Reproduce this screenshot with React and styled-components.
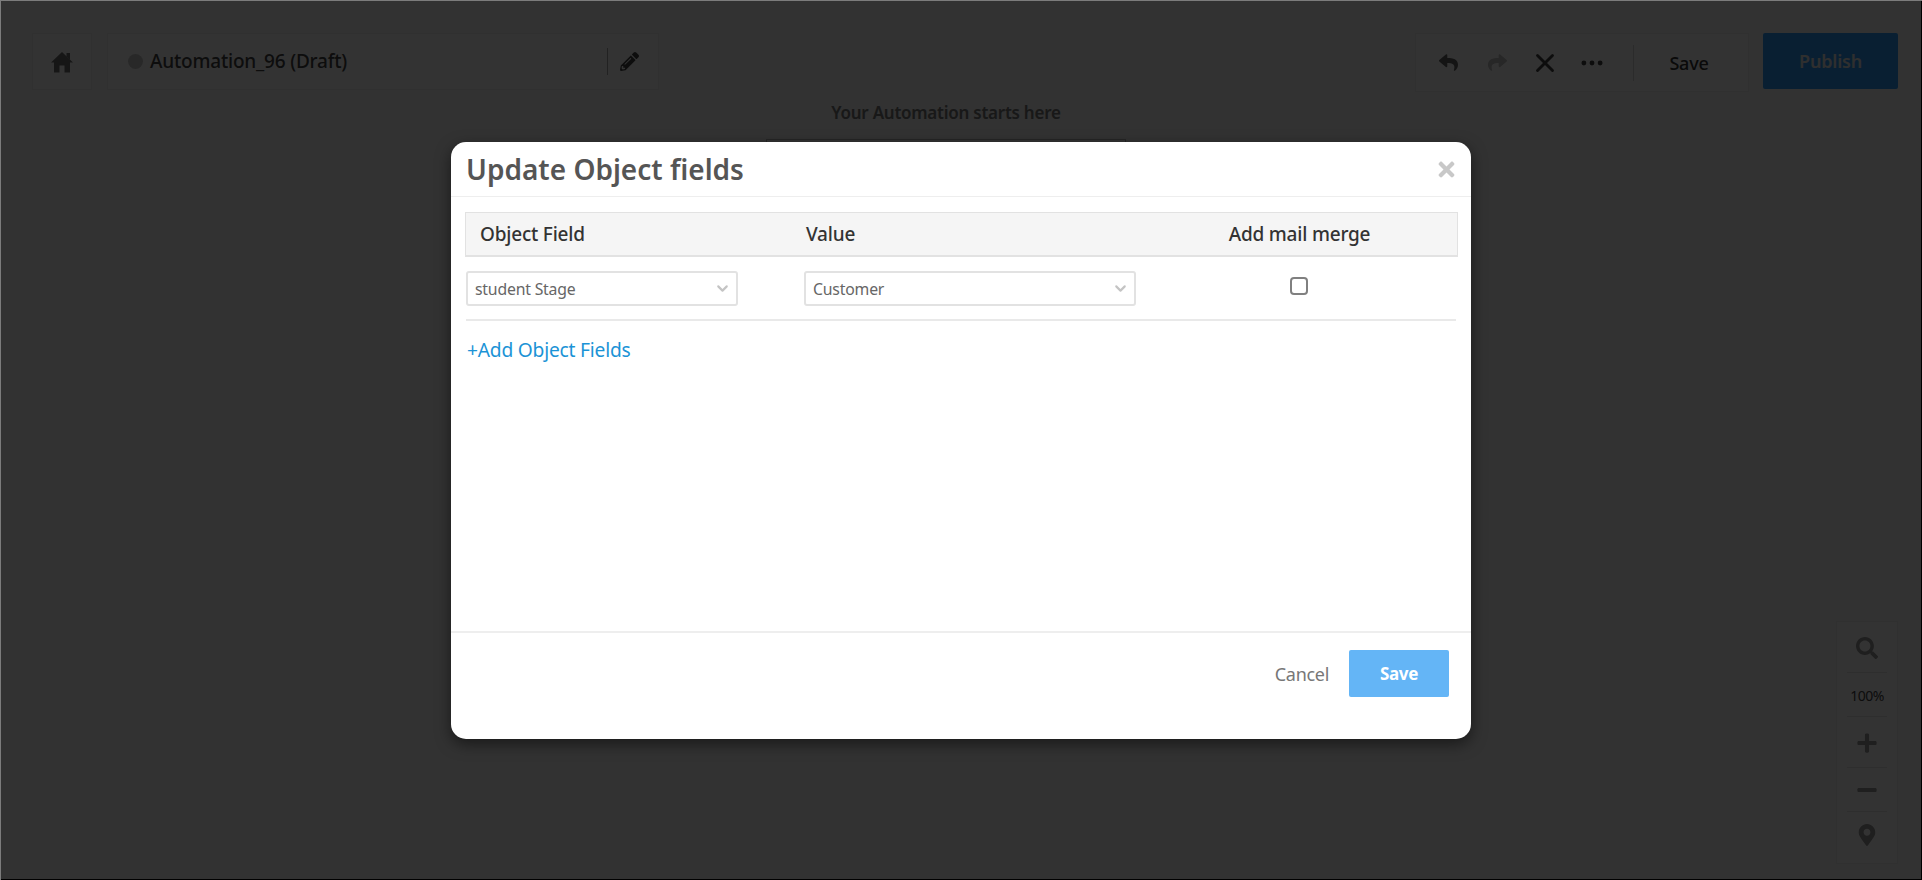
import React from 'react';
import styled, { createGlobalStyle } from 'styled-components';
import { FaPencilAlt, FaReply, FaShare, FaTimes, FaSearch, FaPlus, FaMinus, FaMapMarkerAlt } from 'react-icons/fa';
import { BsThreeDots } from 'react-icons/bs';
import { X, ChevronDown } from 'lucide-react';

const Global = createGlobalStyle`
  html, body { margin: 0; padding: 0; height: 880px; overflow: hidden; background: #f8f8f8; }
  * { box-sizing: border-box; }
  body { font-family: "Noto Sans", "Open Sans", Arial, sans-serif; }
`;

const Stage = styled.div`
  position: relative;
  width: 1922px;
  height: 880px;
  overflow: hidden;
  background: #f8f8f8;
  color: #555;
`;
const TopBar = styled.header`
  display: flex;
  align-items: flex-start;
  padding: 33px 24px 0 32px;
  gap: 15px;
`;
const Panel = styled.div`
  display: flex;
  align-items: center;
  background: #fff;
  border: 1px solid #f0f0f0;
`;
const HomeBox = styled(Panel)`
  width: 60px;
  height: 57px;
  justify-content: center;
  color: #707070;
`;
const NameBox = styled(Panel)`
  width: 552px;
  height: 57px;
  padding: 0 19px 0 20px;
`;
const Dot = styled.span`
  width: 15px;
  height: 15px;
  border-radius: 50%;
  background: #c8c8c8;
  flex: none;
  margin-right: 7px;
`;
const Name = styled.span`
  font-size: 19px;
  font-weight: 500;
  letter-spacing: -0.2px;
  flex: 1;
  color: #444;
  padding-bottom: 1px;
`;
const EditCell = styled.span`
  display: flex;
  align-items: center;
  height: 27px;
  padding-left: 12px;
  border-left: 1px solid #aaa;
  font-size: 19px;
  color: #444;
`;
const RightGroup = styled.div`
  margin-left: auto;
  display: flex;
  align-items: flex-start;
  gap: 14px;
`;
const Actions = styled(Panel)`
  width: 334px;
  height: 59px;
  padding-left: 22px;
`;
const ActionIcon = styled.span`
  display: flex;
  align-items: center;
  justify-content: center;
  width: ${p => p.$w}px;
  margin-right: ${p => p.$gap}px;
  color: ${p => p.$tone};
  font-size: ${p => p.$size}px;
`;
const ActionDivider = styled.span`
  width: 1px;
  height: 36px;
  background: #d4d4d4;
`;
const ActionSave = styled.span`
  flex: 1;
  text-align: center;
  font-size: 18px;
  font-weight: 500;
  color: #333;
  letter-spacing: -0.2px;
  padding-right: 4px;
`;
const Publish = styled.button`
  width: 135px;
  height: 56px;
  border: 0;
  border-radius: 2px;
  background: #2f9dfb;
  color: #e8e8e8;
  font: 600 18px "Noto Sans", sans-serif;
  letter-spacing: -0.2px;
`;
const Canvas = styled.main`
  display: flex;
  flex-direction: column;
  align-items: center;
  padding: 9px 30px 0 0;
`;
const StartLabel = styled.div`
  font-size: 17px;
  font-weight: 600;
  letter-spacing: -0.25px;
  line-height: 24px;
  color: #777;
`;
const TriggerCard = styled.div`
  width: 360px;
  height: 120px;
  margin-top: 14px;
  background: #fff;
  border: 1px solid #bbb;
`;
const ZoomPanel = styled.aside`
  position: absolute;
  left: 1836px;
  top: 621px;
  width: 62px;
  height: 243px;
  display: flex;
  flex-direction: column;
  align-items: center;
  background: #fff;
  border: 1px solid #eee;
`;
const ZoomCell = styled.div`
  width: 100%;
  height: ${p => p.$h}px;
  padding-bottom: ${p => p.$lift || 0}px;
  display: flex;
  align-items: center;
  justify-content: center;
  font-size: 22px;
  color: #999;
  position: relative;
  &:not(:last-child)::after {
    content: '';
    position: absolute;
    left: 10px;
    right: 10px;
    bottom: 0;
    height: 1px;
    background: #e4e4e4;
  }
`;
const ZoomText = styled.span`
  font-size: 14px;
  color: #444;
  letter-spacing: -0.5px;
`;
const Overlay = styled.div`
  position: absolute;
  inset: 0;
  display: flex;
  justify-content: center;
  align-items: flex-start;
  padding-top: 142px;
  background: rgba(0, 0, 0, 0.8);
  box-shadow: inset 1px 1px 0 #7c7c7c, inset -1px -1px 0 #000;
`;
const Modal = styled.section`
  width: 1020px;
  height: 597px;
  display: flex;
  flex-direction: column;
  background: #fff;
  border-radius: 15px;
  box-shadow: 0 5px 15px rgba(0, 0, 0, 0.5);
`;
const ModalHeader = styled.div`
  height: 55px;
  flex: none;
  display: flex;
  align-items: center;
  justify-content: space-between;
  padding: 0 13px 0 15px;
  border-bottom: 1px solid #eee;
`;
const Title = styled.h2`
  margin: 0;
  font-size: 28px;
  font-weight: 600;
  color: #555;
`;
const Close = styled.span`
  display: flex;
  font-size: 23px;
  color: #c8c8c8;
  margin-top: 1px;
`;
const ModalBody = styled.div`
  flex: 1;
  padding: 15px 14px 0 15px;
`;
const Columns = styled.div`
  display: grid;
  grid-template-columns: 338px 337px 1fr;
  align-items: center;
`;
const TableHead = styled(Columns)`
  height: 45px;
  background: #f5f5f5;
  border: 1px solid #e2e2e2;
  border-bottom-width: 2px;
  margin: 0 -1px;
  padding-left: 1px;
`;
const HeadCell = styled.div`
  font-size: 19px;
  font-weight: 500;
  letter-spacing: -0.2px;
  color: #333;
  padding-left: ${p => p.$pad || 0}px;
  text-align: ${p => (p.$center ? 'center' : 'left')};
`;
const FieldRow = styled(Columns)`
  height: 64px;
  padding-top: 14px;
  align-items: flex-start;
  border-bottom: 2px solid #e9e9e9;
  margin-right: 1px;
`;
const SelectBox = styled.div`
  width: ${p => p.$w}px;
  height: 35px;
  display: flex;
  align-items: center;
  justify-content: space-between;
  padding: 0 5px 0 7px;
  border: 2px solid #e2e2e2;
  border-radius: 3px;
  font-size: 15.8px;
  letter-spacing: -0.2px;
  color: #666;
  svg { color: #c4c4c4; }
`;
const CheckCell = styled.div`
  display: flex;
  justify-content: center;
  padding-top: 6px;
`;
const Check = styled.input`
  appearance: none;
  margin: 0;
  width: 18px;
  height: 18px;
  border: 2px solid #808080;
  border-radius: 4px;
  background: #fff;
`;
const AddLink = styled.a`
  display: block;
  margin-top: 15px;
  line-height: 27px;
  font-size: 19.2px;
  letter-spacing: -0.2px;
  color: #1b93d6;
  padding-left: 1px;
`;
const ModalFooter = styled.div`
  height: 108px;
  flex: none;
  display: flex;
  justify-content: flex-end;
  align-items: flex-start;
  gap: 20px;
  padding: 17px 22px 0 0;
  border-top: 2px solid #eee;
`;
const Cancel = styled.button`
  border: 0;
  background: none;
  padding: 0;
  height: 47px;
  font: 400 18px "Noto Sans", sans-serif;
  letter-spacing: -0.3px;
  color: #777;
`;
const SaveButton = styled.button`
  width: 100px;
  height: 47px;
  border: 0;
  border-radius: 2px;
  background: #64b5f6;
  color: #fff;
  font: 700 17px "Noto Sans", sans-serif;
  letter-spacing: -0.3px;
`;

const HomeIcon = () => (
  <svg width="24" height="24" viewBox="0 0 24 24" fill="currentColor" aria-hidden="true">
    <path d="M12 2 L23 12.5 H20 V22.5 H14.5 V15.5 H9.5 V22.5 H4 V12.5 H1 Z" />
    <path d="M16.5 3 H20 V10 L16.5 6.5 Z" />
  </svg>
);

export default function App() {
  return (
    <Stage>
      <Global />
      <TopBar>
        <HomeBox><HomeIcon /></HomeBox>
        <NameBox>
          <Dot />
          <Name>Automation_96 (Draft)</Name>
          <EditCell><FaPencilAlt /></EditCell>
        </NameBox>
        <RightGroup>
          <Actions>
            <ActionIcon $w={20} $gap={29} $size={19} $tone="#666"><FaReply /></ActionIcon>
            <ActionIcon $w={20} $gap={21} $size={19} $tone="#c0c0c0"><FaShare /></ActionIcon>
            <ActionIcon $w={34} $gap={17} $size={30} $tone="#444"><X size={30} strokeWidth={2.3} /></ActionIcon>
            <ActionIcon $w={26} $gap={28} $size={28} $tone="#444"><BsThreeDots /></ActionIcon>
            <ActionDivider />
            <ActionSave>Save</ActionSave>
          </Actions>
          <Publish>Publish</Publish>
        </RightGroup>
      </TopBar>
      <Canvas>
        <StartLabel>Your Automation starts here</StartLabel>
        <TriggerCard />
      </Canvas>
      <ZoomPanel>
        <ZoomCell $h={51}><FaSearch /></ZoomCell>
        <ZoomCell $h={44}><ZoomText>100%</ZoomText></ZoomCell>
        <ZoomCell $h={51}><FaPlus /></ZoomCell>
        <ZoomCell $h={44}><FaMinus /></ZoomCell>
        <ZoomCell $h={51} $lift={6}><FaMapMarkerAlt /></ZoomCell>
      </ZoomPanel>
      <Overlay>
        <Modal>
          <ModalHeader>
            <Title>Update Object fields</Title>
            <Close><FaTimes /></Close>
          </ModalHeader>
          <ModalBody>
            <TableHead>
              <HeadCell $pad={13}>Object Field</HeadCell>
              <HeadCell $pad={1}>Value</HeadCell>
              <HeadCell $center>Add mail merge</HeadCell>
            </TableHead>
            <FieldRow>
              <SelectBox $w={272}>student Stage<ChevronDown size={17} strokeWidth={3} /></SelectBox>
              <SelectBox $w={332}>Customer<ChevronDown size={17} strokeWidth={3} /></SelectBox>
              <CheckCell><Check type="checkbox" /></CheckCell>
            </FieldRow>
            <AddLink>+Add Object Fields</AddLink>
          </ModalBody>
          <ModalFooter>
            <Cancel>Cancel</Cancel>
            <SaveButton>Save</SaveButton>
          </ModalFooter>
        </Modal>
      </Overlay>
    </Stage>
  );
}
